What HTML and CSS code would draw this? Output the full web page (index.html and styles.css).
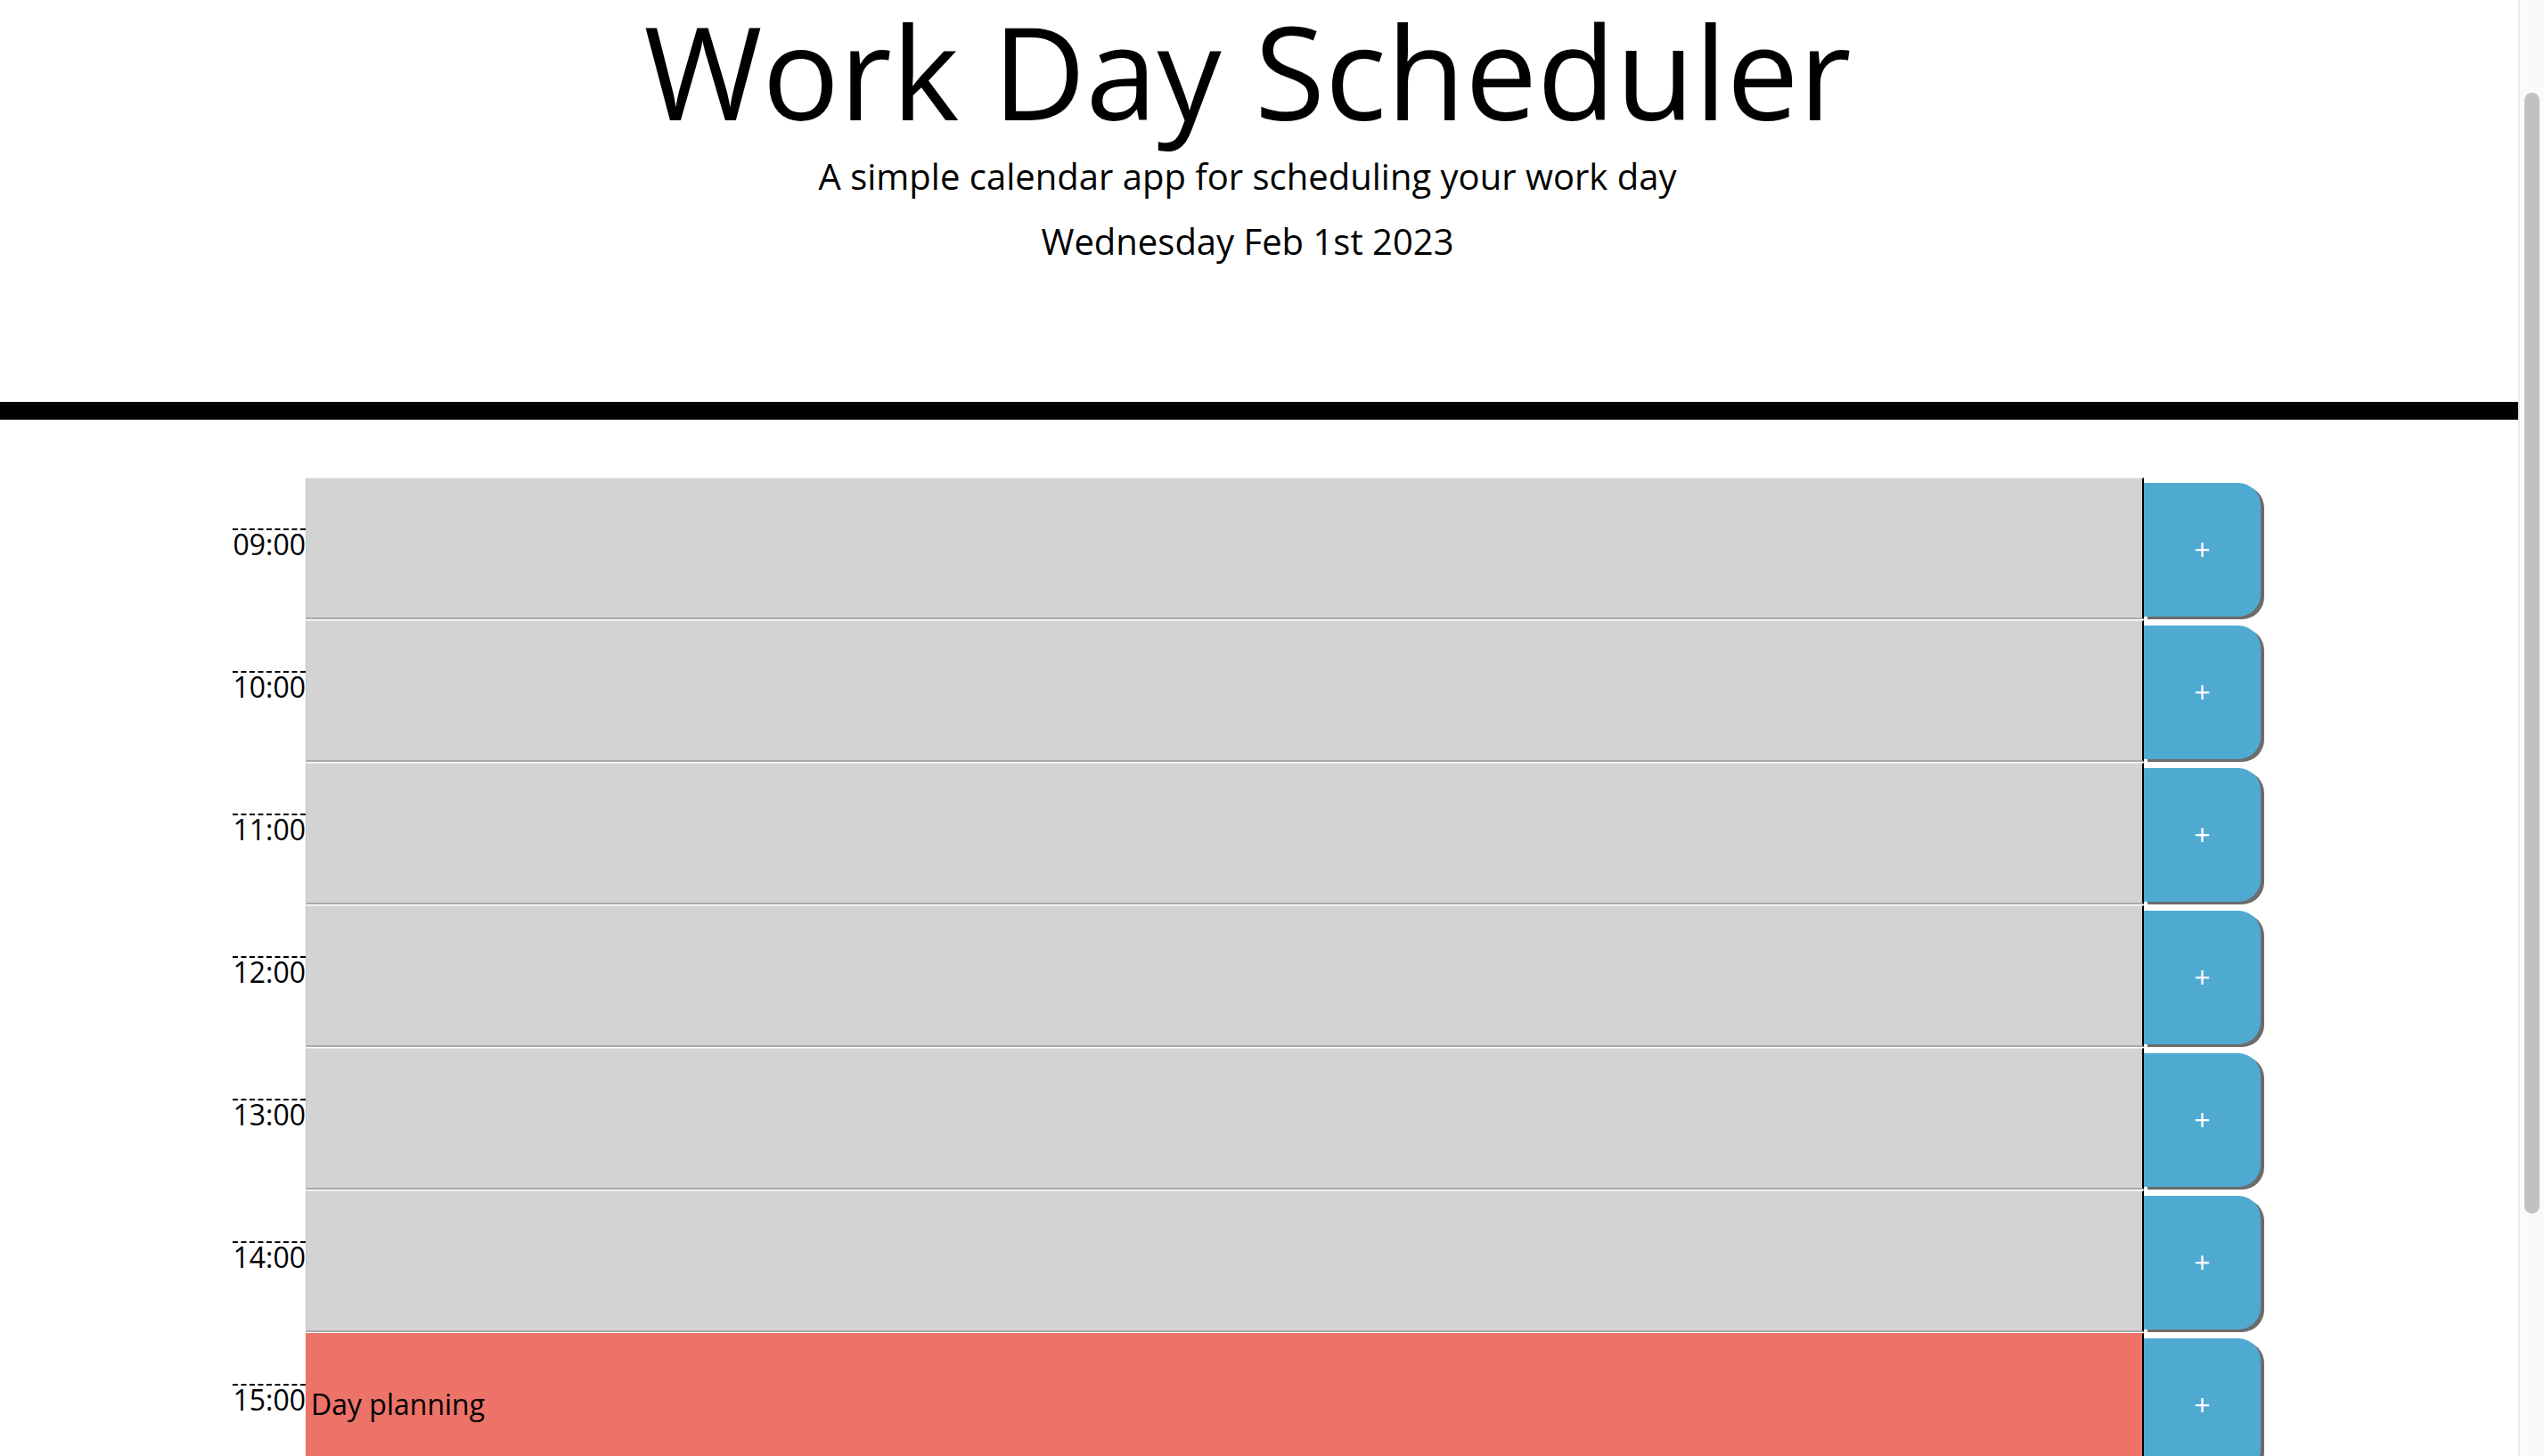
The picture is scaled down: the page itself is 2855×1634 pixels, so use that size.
FILE: index.html
```html
<!DOCTYPE html>
<html lang="en">
<head>
<meta charset="utf-8">
<title>Work Day Scheduler</title>
<link rel="stylesheet" href="styles.css">
</head>
<body>
<div class="page">
  <header class="jumbotron">
    <h1 class="title">Work Day Scheduler</h1>
    <p class="lead">A simple calendar app for scheduling your work day</p>
    <p class="lead current-day">Wednesday Feb 1st 2023</p>
  </header>
  <main class="container">
    <div class="row past"><div class="hour">09:00</div><textarea class="description"></textarea><button class="save-btn">+</button></div>
    <div class="row past"><div class="hour">10:00</div><textarea class="description"></textarea><button class="save-btn">+</button></div>
    <div class="row past"><div class="hour">11:00</div><textarea class="description"></textarea><button class="save-btn">+</button></div>
    <div class="row past"><div class="hour">12:00</div><textarea class="description"></textarea><button class="save-btn">+</button></div>
    <div class="row past"><div class="hour">13:00</div><textarea class="description"></textarea><button class="save-btn">+</button></div>
    <div class="row past"><div class="hour">14:00</div><textarea class="description"></textarea><button class="save-btn">+</button></div>
    <div class="row present"><div class="hour">15:00</div><textarea class="description">Day planning</textarea><button class="save-btn">+</button></div>
    <div class="row future"><div class="hour">16:00</div><textarea class="description"></textarea><button class="save-btn">+</button></div>
    <div class="row future"><div class="hour">17:00</div><textarea class="description"></textarea><button class="save-btn">+</button></div>
  </main>
</div>
<div class="scrollbar"><div class="thumb"></div></div>
</body>
</html>
```
FILE: styles.css
```css
html, body {
  margin: 0;
  height: 100%;
}
body {
  display: flex;
  overflow: hidden;
  background: #ffffff;
  color: #000000;
  font-family: "Open Sans", "Noto Sans", sans-serif;
}
.page {
  flex: 1;
  min-width: 0;
  overflow: hidden;
}
.jumbotron {
  text-align: center;
  padding: 0 26px 150px 0;
  border-bottom: 20px solid #000000;
}
.title {
  margin: 0 0 10px;
  font-size: 144px;
  font-weight: 400;
  line-height: 1.1;
}
.lead {
  margin: 0 0 13px;
  font-size: 40px;
  line-height: 1.5;
}
.current-day {
  margin-bottom: 0;
}
.container {
  width: 2276px;
  margin: 65px 0 11px 261px;
  display: flex;
  flex-direction: column;
  gap: 1px;
}
.row {
  display: grid;
  grid-template-columns: 82px 1fr 131px;
  height: 159px;
}
.hour {
  align-self: start;
  margin-top: 57px;
  border-top: 2px dashed #000000;
  font-size: 32px;
  line-height: 1;
  text-align: right;
  white-space: nowrap;
}
.description {
  box-sizing: border-box;
  height: 159px;
  margin: 0;
  padding: 55px 2px 0 5px;
  resize: none;
  font-family: inherit;
  font-size: 32px;
  line-height: 1.5;
  color: #000000;
  border: 0;
  border-top: 1px solid #e9e9e9;
  border-left: 1px solid #c4c4c4;
  border-bottom: 2px solid #a9a9a9;
  border-right: 2px solid #000000;
  outline: none;
}
.past .description {
  background: #d3d3d3;
}
.present .description {
  background: #ed7268;
  border-top-color: #ed7268;
  border-left-color: #ed7268;
}
.future .description {
  background: #77dd77;
}
.save-btn {
  margin: 6px 0 0;
  height: 150px;
  padding: 0;
  border: 0;
  border-radius: 0 25px 25px 0;
  background: #4faad2;
  color: #ffffff;
  font-family: inherit;
  font-size: 32px;
  line-height: 1;
  box-shadow: 4px 3px 0 #6c6c6c;
}
.scrollbar {
  flex: 0 0 29px;
  box-sizing: border-box;
  height: 100%;
  background: #fafafa;
  border-left: 2px solid #ececec;
}
.thumb {
  margin: 104px 5px 0 5px;
  height: 1258px;
  border-radius: 9px;
  background: #c1c1c1;
}
```
